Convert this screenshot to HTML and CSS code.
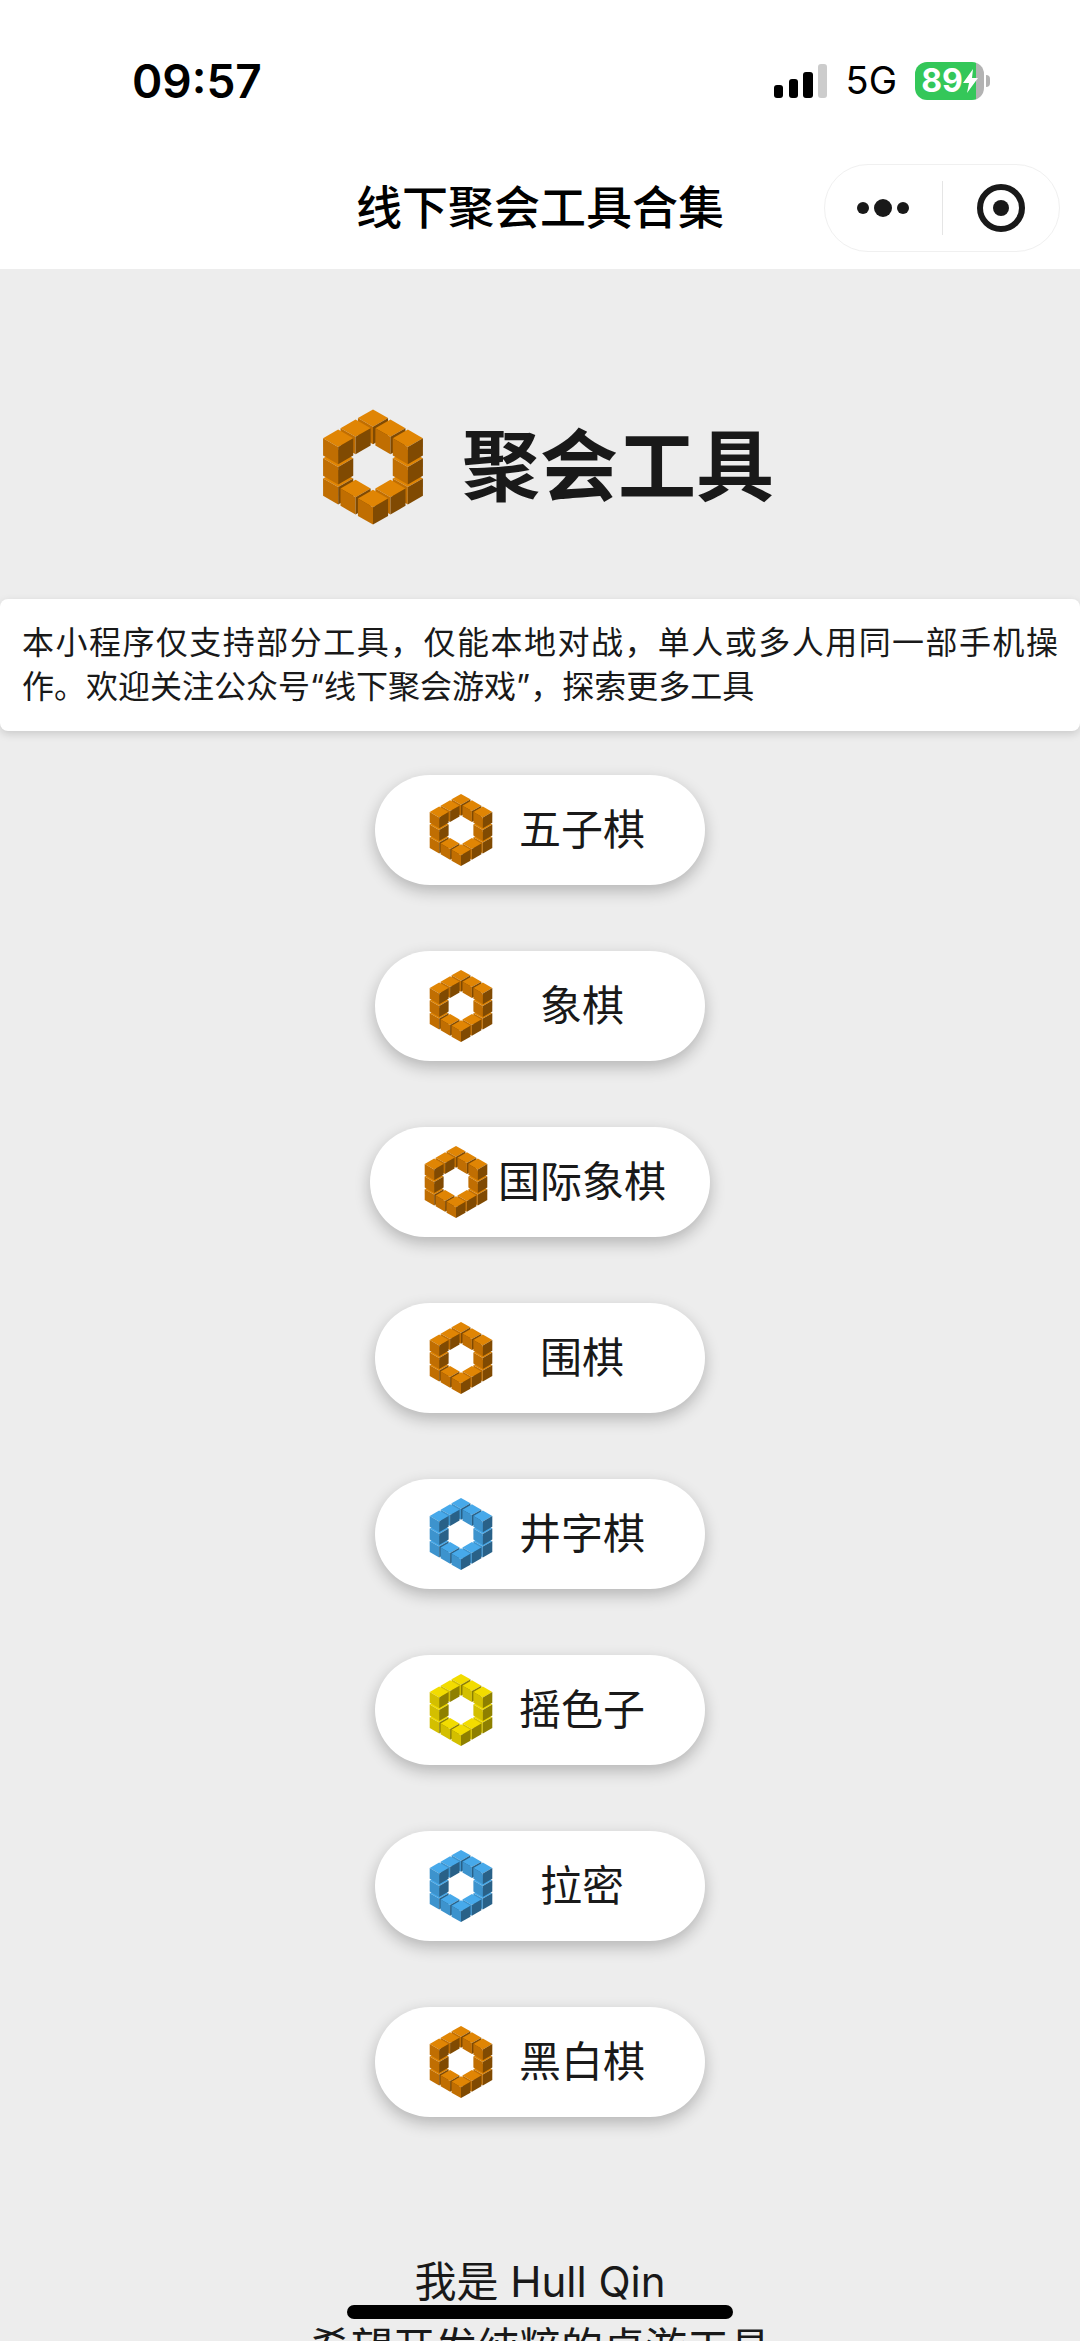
FILE: index.html
```html
<!DOCTYPE html>
<html lang="zh-Hans">
<head>
    <meta charset="UTF-8">
    <meta name="viewport" content="width=device-width, initial-scale=1.0">
    <title>线下聚会工具合集</title>
    <link rel="stylesheet" href="styles.css">
</head>
<body>

    <!-- 图标定义 -->
    <svg class="defs" aria-hidden="true">
        <symbol id="cube" viewBox="-45 0 90 104" overflow="visible">
            <path class="face-top" d="M0 0L45 26L0 52L-45 26Z"/>
            <path class="face-left" d="M-45 26L0 52V104L-45 78Z"/>
            <path class="face-right" d="M45 26L0 52V104L45 78Z"/>
        </symbol>
        <symbol id="logo" viewBox="0 0 400 400">
            <use href="#cube" x="155" y="28" width="90" height="104"/>
            <use href="#cube" x="103" y="58" width="90" height="104"/>
            <use href="#cube" x="207" y="58" width="90" height="104"/>
            <use href="#cube" x="51" y="208" width="90" height="104"/>
            <use href="#cube" x="259" y="208" width="90" height="104"/>
            <use href="#cube" x="51" y="148" width="90" height="104"/>
            <use href="#cube" x="259" y="148" width="90" height="104"/>
            <use href="#cube" x="51" y="88" width="90" height="104"/>
            <use href="#cube" x="259" y="88" width="90" height="104"/>
            <use href="#cube" x="103" y="238" width="90" height="104"/>
            <use href="#cube" x="207" y="238" width="90" height="104"/>
            <use href="#cube" x="155" y="268" width="90" height="104"/>
        </symbol>
    </svg>

    <header class="header">
        <div class="status">
            <span class="time">09:57</span>
            <div class="status-right">
                <svg class="signal" viewBox="0 0 54 34" aria-hidden="true">
                    <rect x="0" y="21" width="9" height="13" rx="3"/>
                    <rect x="15" y="15" width="9" height="19" rx="3"/>
                    <rect x="29" y="8" width="10" height="26" rx="3"/>
                    <rect class="weak" x="44" y="0" width="9" height="34" rx="3"/>
                </svg>
                <span class="network">5G</span>
                <div class="battery">
                    <span class="battery-body">89<svg class="bolt" viewBox="0 0 15 24" aria-hidden="true"><path d="M10 0L0 14H6L4 24L15 9H9Z"/></svg></span>
                    <span class="battery-tip"></span>
                </div>
            </div>
        </div>
        <div class="nav">
            <div class="nav-title">线下聚会工具合集</div>
            <div class="capsule">
                <button class="capsule-btn" aria-label="更多">
                    <svg class="icon-more" viewBox="0 0 52 20"><circle cx="6" cy="10" r="6"/><circle cx="26" cy="10" r="9"/><circle cx="46" cy="10" r="6"/></svg>
                </button>
                <button class="capsule-btn" aria-label="关闭">
                    <svg class="icon-close" viewBox="0 0 48 48"><circle class="ring" cx="24" cy="24" r="21"/><circle cx="24" cy="24" r="8"/></svg>
                </button>
            </div>
        </div>
    </header>

    <main class="main">
        <h1 class="title">
            <svg class="title-logo orange" aria-hidden="true"><use href="#logo"/></svg>
            聚会工具
        </h1>

        <p class="notice">本小程序仅支持部分工具，仅能本地对战，单人或多人用同一部手机操作。欢迎关注公众号“线下聚会游戏”，探索更多工具</p>

        <div class="tools">
            <button class="tool"><svg class="tool-icon orange" aria-hidden="true"><use href="#logo"/></svg><span class="tool-name">五子棋</span></button>
            <button class="tool"><svg class="tool-icon orange" aria-hidden="true"><use href="#logo"/></svg><span class="tool-name">象棋</span></button>
            <button class="tool"><svg class="tool-icon orange" aria-hidden="true"><use href="#logo"/></svg><span class="tool-name">国际象棋</span></button>
            <button class="tool"><svg class="tool-icon orange" aria-hidden="true"><use href="#logo"/></svg><span class="tool-name">围棋</span></button>
            <button class="tool"><svg class="tool-icon blue" aria-hidden="true"><use href="#logo"/></svg><span class="tool-name">井字棋</span></button>
            <button class="tool"><svg class="tool-icon yellow" aria-hidden="true"><use href="#logo"/></svg><span class="tool-name">摇色子</span></button>
            <button class="tool"><svg class="tool-icon blue" aria-hidden="true"><use href="#logo"/></svg><span class="tool-name">拉密</span></button>
            <button class="tool"><svg class="tool-icon orange" aria-hidden="true"><use href="#logo"/></svg><span class="tool-name">黑白棋</span></button>
        </div>

        <div class="about">
            <p>我是 Hull Qin</p>
            <p>希望开发纯粹的桌游工具</p>
        </div>
    </main>

    <div class="home-bar"></div>

</body>
</html>
```

FILE: styles.css
```css
* {
    box-sizing: border-box;
}

html,
body {
    height: 100%;
}

body {
    display: flex;
    flex-direction: column;
    margin: 0;
    overflow: hidden;
    background-color: #ededed;
    color: #191919;
    font-family: Inter, "Noto Sans CJK SC", sans-serif;
    line-height: 1.4;
}

button {
    margin: 0;
    border: none;
    background: none;
    color: inherit;
    font-family: inherit;
    line-height: inherit;
    cursor: pointer;
}

.defs {
    position: absolute;
    width: 0;
    height: 0;
}

/* 立方体配色 */
.face-top {
    fill: var(--top);
}

.face-left {
    fill: var(--left);
}

.face-right {
    fill: var(--right);
}

.orange {
    --top: #e08504;
    --left: #c06e02;
    --right: #804a02;
}

.blue {
    --top: #47a9ea;
    --left: #3d93cd;
    --right: #296188;
}

.yellow {
    --top: #f2dc00;
    --left: #d3bf00;
    --right: #8e8000;
}

/* 顶部 */
.header {
    flex: none;
    background-color: #fff;
    color: #000;
}

.status {
    display: flex;
    align-items: center;
    justify-content: space-between;
    height: 162px;
    padding: 0 90px 0 132px;
}

.time {
    font-size: 46px;
    font-weight: 600;
}

.status-right {
    display: flex;
    align-items: center;
    gap: 18px;
}

.signal {
    width: 54px;
    height: 34px;
}

.signal .weak {
    fill: #ccc;
}

.network {
    font-size: 38px;
}

.battery {
    display: flex;
    align-items: center;
    gap: 2px;
}

.battery-body {
    display: flex;
    align-items: center;
    justify-content: center;
    width: 69px;
    height: 38px;
    border-radius: 12px;
    background: linear-gradient(to right, #34c759 89%, #b3b3b3 89%);
    color: #fff;
    font-size: 32px;
    font-weight: 700;
}

.bolt {
    width: 15px;
    height: 24px;
    fill: #fff;
}

.battery-tip {
    width: 4px;
    height: 12px;
    border-radius: 0 4px 4px 0;
    background-color: #b3b3b3;
}

.nav {
    display: grid;
    grid-template-columns: 1fr auto 1fr;
    align-items: center;
    height: 107px;
    padding: 0 20px 16px;
}

.nav-title {
    grid-column: 2;
    font-size: 46px;
    font-weight: 500;
}

.capsule {
    display: flex;
    align-items: center;
    justify-self: end;
    width: 236px;
    height: 88px;
    border: 1px solid #f0f0f0;
    border-radius: 44px;
}

.capsule-btn {
    display: flex;
    flex: 1;
    align-items: center;
    justify-content: center;
    height: 54px;
    padding: 0;
    color: #191919;
}

.capsule-btn + .capsule-btn {
    border-left: 1px solid #e5e5e5;
}

.capsule-btn svg {
    fill: currentColor;
}

.icon-more {
    width: 52px;
    height: 20px;
}

.icon-close {
    width: 48px;
    height: 48px;
}

.icon-close .ring {
    fill: none;
    stroke: currentColor;
    stroke-width: 6;
}

/* 内容 */
.main {
    flex: 1;
    min-height: 0;
    overflow-y: auto;
    scrollbar-width: none;
}

.title {
    display: flex;
    align-items: center;
    justify-content: center;
    gap: 22px;
    height: 330px;
    margin: 0;
    padding-top: 66px;
    font-size: 78px;
    font-weight: 700;
}

.title-logo {
    width: 134px;
    height: 134px;
}

.notice {
    margin: 0;
    padding: 22px;
    border-radius: 8px;
    background-color: #fff;
    box-shadow: 0 3px 8px rgba(0, 0, 0, 0.15);
    font-size: 32px;
    line-height: 44px;
    text-align: justify;
}

.tools {
    display: flex;
    flex-direction: column;
    align-items: center;
    gap: 66px;
    padding: 44px 0 132px;
}

.tool {
    display: flex;
    align-items: center;
    min-width: 330px;
    height: 110px;
    padding: 0 44px;
    border-radius: 55px;
    background-color: #fff;
    box-shadow: 0 6px 16px rgba(0, 0, 0, 0.24);
    font-size: 42px;
}

.tool-icon {
    width: 84px;
    height: 84px;
}

.tool-name {
    flex: 1;
    text-align: center;
}

.about {
    font-size: 42px;
    line-height: 66px;
    text-align: center;
}

.about p {
    margin: 0;
}

/* 底部横条 */
.home-bar {
    position: fixed;
    bottom: 22px;
    left: 50%;
    width: 386px;
    height: 14px;
    margin-left: -193px;
    border-radius: 7px;
    background-color: #000;
}
```
